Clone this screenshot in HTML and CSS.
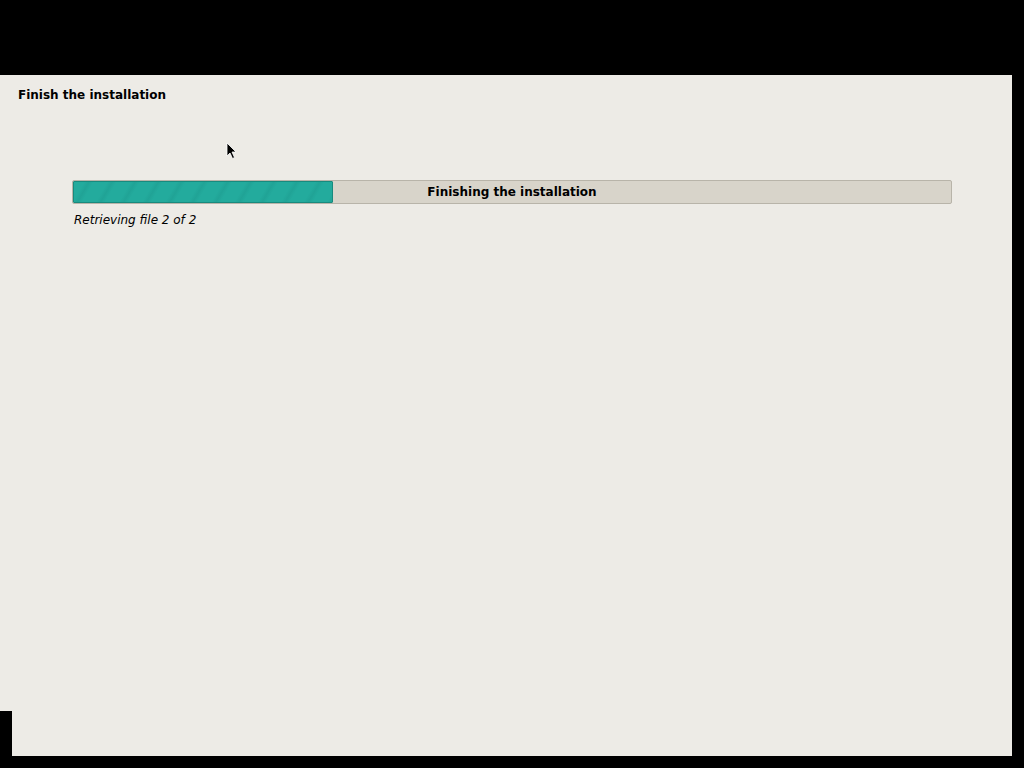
FILE: index.html
```html
<!DOCTYPE html>
<html>
<head>
<meta charset="utf-8">
<link rel="stylesheet" href="styles.css">
</head>
<body>
<div class="screen">
  <div class="panel">
    <h1 class="title">Finish the installation</h1>
    <div class="content">
      <div class="progress">
        <div class="fill" style="width: 29.6%"></div>
        <div class="label">Finishing the installation</div>
      </div>
      <div class="status">Retrieving file 2 of 2</div>
    </div>
    <div class="corner"></div>
    <svg class="cursor" width="12" height="18" viewBox="0 0 12 18">
      <path d="M1 1 L1 14 L4 11 L6.5 16.5 L8.5 15.5 L6 10 L10 10 Z" fill="#000" stroke="#fff" stroke-width="0.8"/>
    </svg>
  </div>
</div>
</body>
</html>
```
FILE: styles.css
```css
html, body {
  margin: 0;
  padding: 0;
  background: #000;
}
.screen {
  width: 1024px;
  height: 768px;
  background: #000;
  padding-top: 75px;
  box-sizing: border-box;
}
.panel {
  position: relative;
  width: 1012px;
  height: 681px;
  background: #edebe6;
  font-family: "DejaVu Sans", sans-serif;
  color: #000;
}
.title {
  margin: 0;
  padding: 13px 0 0 18px;
  font-size: 12px;
  font-weight: bold;
  line-height: 15px;
}
.content {
  padding: 77px 60px 0 72px;
}
.progress {
  position: relative;
  height: 22px;
  border: 1px solid #b8b4a9;
  border-radius: 2px;
  background: #d8d4ca;
  box-sizing: content-box;
}
.fill {
  height: 100%;
  background: repeating-linear-gradient(120deg, #23ab9d 0px, #23ab9d 9px, #20a396 13px, #23ab9d 17px, #23ab9d 20px);
  border: 1px solid #188a7e;
  border-radius: 1px;
  box-sizing: border-box;
}
.label {
  position: absolute;
  left: 0;
  right: 0;
  top: 0;
  line-height: 22px;
  text-align: center;
  font-size: 12px;
  font-weight: bold;
}
.status {
  margin-top: 9px;
  padding-left: 2px;
  font-size: 12px;
  font-style: italic;
  line-height: 15px;
}
.corner {
  position: absolute;
  left: 0;
  top: 636px;
  width: 12px;
  height: 45px;
  background: #000;
}
.cursor {
  position: absolute;
  left: 226px;
  top: 67px;
}
```
